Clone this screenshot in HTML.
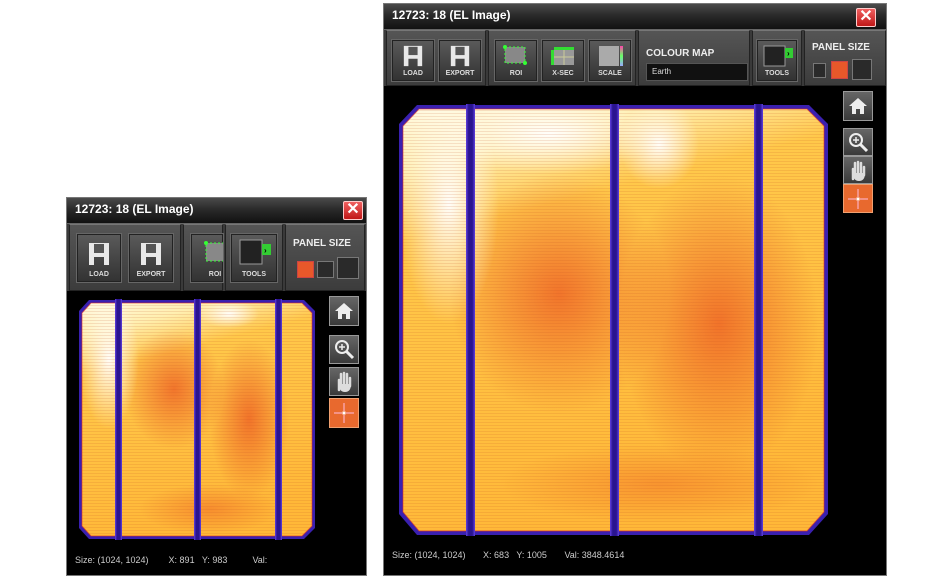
<!DOCTYPE html>
<html><head><meta charset="utf-8"><style>
*{margin:0;padding:0;box-sizing:border-box}
body{width:950px;height:580px;background:#fff;position:relative;overflow:hidden;font-family:"Liberation Sans",sans-serif}
.win{position:absolute;background:#000;border:1px solid #777}
.title{position:absolute;left:0;right:0;top:0;height:25px;background:linear-gradient(#4a4a4a,#2a2a2a 45%,#111);color:#fff;font-weight:bold;font-size:12px;padding:4px 0 0 8px}
.x{position:absolute;top:3px;width:20px;height:19px;background:linear-gradient(#f06060,#c01818);border:1px solid #fcc;border-radius:2px;color:#fff;font-size:16px;line-height:16px;text-align:center;font-weight:bold}
.tb{position:absolute;left:0;right:0;background:#3a3a3a;border-top:1px solid #666}
.grp{position:absolute;top:0;bottom:0;background:linear-gradient(#555,#3c3c3c);border:1px solid #222;border-top-color:#777}
.btn{position:absolute;background:linear-gradient(#5a5a5a,#444 55%,#333);border:1px solid #222;outline:1px solid #666;color:#ddd;font-size:7px;font-weight:bold;text-align:center}
.btn span{position:absolute;left:0;right:0;bottom:3px}
.lbl{position:absolute;color:#eee;font-weight:bold;font-size:10px}
.sq{position:absolute;border:1px solid #777;background:#2a2a2a}
.tool{position:absolute;background:linear-gradient(#666,#3a3a3a);border:1px solid #999}
.stat{position:absolute;color:#ccc;font-size:9px;white-space:pre}
</style></head><body>

<svg width="0" height="0" style="position:absolute">
<defs>
<linearGradient id="lg" x1="0" y1="0" x2="0.25" y2="1">
<stop offset="0" stop-color="#fffbe8"/><stop offset="0.15" stop-color="#ffefb0"/><stop offset="0.3" stop-color="#ffc84a"/><stop offset="1" stop-color="#ffb838"/>
</linearGradient>
<radialGradient id="r1" cx="0.5" cy="0.5" r="0.5"><stop offset="0" stop-color="#e8401a" stop-opacity="0.6"/><stop offset="1" stop-color="#e8401a" stop-opacity="0"/></radialGradient>
<radialGradient id="w1" cx="0.5" cy="0.5" r="0.5"><stop offset="0" stop-color="#fff" stop-opacity="0.95"/><stop offset="1" stop-color="#fff" stop-opacity="0"/></radialGradient>
<pattern id="ln" width="4" height="3" patternUnits="userSpaceOnUse"><rect width="4" height="1" fill="#c05020" opacity="0.15"/></pattern>
<linearGradient id="bb" x1="0" x2="1"><stop offset="0" stop-color="#6040e0"/><stop offset="0.3" stop-color="#2a1490"/><stop offset="0.7" stop-color="#2a1490"/><stop offset="1" stop-color="#6040e0"/></linearGradient>
<clipPath id="cs"><path d="M12 4H223L233 14V227L223 237H12L3 227V14Z"/></clipPath>
<clipPath id="cl"><path d="M20 5H408L425 22V408L408 427H20L4 408V22Z"/></clipPath>
</defs>
</svg>

<!-- Small window -->
<div class="win" style="left:66px;top:197px;width:301px;height:379px">
<div class="title">12723: 18 (EL Image)</div>
<div class="x" style="left:276px">✕</div>
<div class="tb" style="top:25px;height:68px">
 <div class="grp" style="left:2px;width:112px"></div>
 <div class="btn" style="left:10px;top:10px;width:44px;height:48px"><svg width="24" height="26" style="margin-top:6px" viewBox="0 0 24 26"><path d="M2 2h20v22h-5v-8h-10v8h-5z" fill="#e8e8e8"/><rect x="7" y="3" width="10" height="9" fill="#555"/></svg><span>LOAD</span></div>
 <div class="btn" style="left:62px;top:10px;width:44px;height:48px"><svg width="24" height="26" style="margin-top:6px" viewBox="0 0 24 26"><path d="M2 2h20v22h-5v-8h-10v8h-5z" fill="#e8e8e8"/><rect x="7" y="3" width="10" height="9" fill="#555"/></svg><span>EXPORT</span></div>
 <div class="grp" style="left:116px;width:40px"></div>
 <div class="btn" style="left:124px;top:10px;width:32px;height:48px"><svg width="32" height="28" style="margin-top:2px"><rect x="14" y="6" width="22" height="18" fill="#888" stroke="#3f3" stroke-dasharray="2 2"/><circle cx="14" cy="6" r="2" fill="#3f3"/></svg><span style="left:16px">ROI</span></div>
 <div class="grp" style="left:158px;width:58px"></div>
 <div class="btn" style="left:164px;top:10px;width:46px;height:48px"><svg width="40" height="30" style="margin-top:3px"><rect x="6" y="2" width="22" height="24" fill="#222" stroke="#999"/><rect x="28" y="6" width="9" height="11" fill="#3c3"/><text x="30" y="15" font-size="8" fill="#000" font-weight="bold">›</text></svg><span>TOOLS</span></div>
 <div class="grp" style="left:218px;width:80px"></div>
 <div class="lbl" style="left:226px;top:14px">PANEL SIZE</div>
 <div class="sq" style="left:230px;top:37px;width:17px;height:17px;background:#e8582a;border-color:#c44"></div>
 <div class="sq" style="left:250px;top:37px;width:17px;height:17px"></div>
 <div class="sq" style="left:270px;top:33px;width:22px;height:22px"></div>
</div>
<svg style="position:absolute;left:12px;top:101px" width="237" height="241" viewBox="0 0 237 241">
 <path d="M10 1H225L236 12V229L225 240H10L0 229V12Z" fill="#3a20b0"/>
 <g clip-path="url(#cs)">
 <rect width="237" height="241" fill="url(#lg)"/>
 <ellipse cx="95" cy="90" rx="50" ry="60" fill="url(#r1)"/>
 <ellipse cx="170" cy="120" rx="40" ry="80" fill="url(#r1)"/>
 <ellipse cx="130" cy="210" rx="70" ry="25" fill="url(#r1)" opacity="0.6"/>
 <ellipse cx="30" cy="60" rx="30" ry="70" fill="url(#w1)"/>
 <ellipse cx="150" cy="15" rx="30" ry="14" fill="url(#w1)"/>
 <rect width="237" height="241" fill="url(#ln)"/>
 </g>
 <path d="M3 14V227L12 237H223L233 227V14L223 4H12Z" fill="none" stroke="#e03020" stroke-width="1" opacity="0.6"/>
 <rect x="36" y="0" width="7" height="241" fill="url(#bb)"/>
 <rect x="115" y="0" width="7" height="241" fill="url(#bb)"/>
 <rect x="196" y="0" width="7" height="241" fill="url(#bb)"/>
</svg>
<div class="tool" style="left:262px;top:98px;width:30px;height:30px"><svg width="28" height="28"><path d="M14 6L5 14h3v8h4v-5h4v5h4v-8h3z" fill="#eee"/></svg></div>
<div class="tool" style="left:262px;top:137px;width:30px;height:29px"><svg width="28" height="28"><circle cx="12" cy="11" r="6" fill="none" stroke="#eee" stroke-width="2"/><path d="M16 15l7 7" stroke="#eee" stroke-width="3"/><path d="M9 11h6M12 8v6" stroke="#eee" stroke-width="1.5"/></svg></div>
<div class="tool" style="left:262px;top:169px;width:30px;height:29px"><svg width="28" height="28"><path d="M9 22V12M11 18V6M14 18V5M17 18V6M20 18V10" stroke="#ddd" stroke-width="2.5" stroke-linecap="round"/><path d="M9 16q0 8 6 8t6-8" fill="#ddd"/></svg></div>
<div class="tool" style="left:262px;top:200px;width:30px;height:30px;background:#e8692e;border-color:#f0a070"><svg width="28" height="28"><path d="M4 14h8M16 14h8M14 4v8M14 16v8" stroke="#fbd" stroke-width="1"/><rect x="12.5" y="12.5" width="3" height="3" fill="#fff"/></svg></div>
<div class="stat" style="left:8px;top:357px">Size: (1024, 1024)        X: 891   Y: 983          Val:</div>
</div>

<!-- Large window -->
<div class="win" style="left:383px;top:3px;width:504px;height:573px">
<div class="title">12723: 18 (EL Image)</div>
<div class="x" style="left:472px;top:4px">✕</div>
<div class="tb" style="top:25px;height:57px">
 <div class="grp" style="left:2px;width:100px"></div>
 <div class="btn" style="left:8px;top:10px;width:42px;height:41px"><svg width="22" height="24" style="margin-top:3px" viewBox="0 0 24 26"><path d="M2 2h20v22h-5v-8h-10v8h-5z" fill="#e8e8e8"/><rect x="7" y="3" width="10" height="9" fill="#555"/></svg><span>LOAD</span></div>
 <div class="btn" style="left:55px;top:10px;width:42px;height:41px"><svg width="22" height="24" style="margin-top:3px" viewBox="0 0 24 26"><path d="M2 2h20v22h-5v-8h-10v8h-5z" fill="#e8e8e8"/><rect x="7" y="3" width="10" height="9" fill="#555"/></svg><span>EXPORT</span></div>
 <div class="grp" style="left:104px;width:148px"></div>
 <div class="btn" style="left:111px;top:10px;width:42px;height:41px"><svg width="30" height="26" style="margin-top:2px"><rect x="4" y="4" width="20" height="16" fill="#888" stroke="#3f3" stroke-dasharray="2 2"/><circle cx="4" cy="4" r="2" fill="#3f3"/><circle cx="24" cy="20" r="2" fill="#3f3"/></svg><span>ROI</span></div>
 <div class="btn" style="left:158px;top:10px;width:42px;height:41px"><svg width="30" height="26" style="margin-top:2px"><rect x="6" y="4" width="20" height="18" fill="#999"/><rect x="6" y="4" width="20" height="3" fill="#3d3"/><rect x="3" y="7" width="3" height="15" fill="#3d3"/><path d="M16 7v15M6 14h20" stroke="#cc9"/></svg><span>X-SEC</span></div>
 <div class="btn" style="left:205px;top:10px;width:42px;height:41px"><svg width="30" height="26" style="margin-top:2px"><defs><linearGradient id="rb" x1="0" y1="0" x2="0" y2="1"><stop offset="0" stop-color="#f4a"/><stop offset=".5" stop-color="#6f6"/><stop offset="1" stop-color="#9af"/></linearGradient></defs><rect x="4" y="3" width="20" height="20" fill="#aaa"/><rect x="25" y="3" width="3" height="20" fill="url(#rb)"/></svg><span>SCALE</span></div>
 <div class="grp" style="left:254px;width:112px"></div>
 <div class="lbl" style="left:262px;top:18px">COLOUR MAP</div>
 <div style="position:absolute;left:262px;top:33px;width:102px;height:18px;background:#111;border:1px solid #555;color:#ddd;font-size:8px;padding:3px 5px">Earth</div>
 <div class="grp" style="left:368px;width:50px"></div>
 <div class="btn" style="left:373px;top:10px;width:40px;height:41px"><svg width="36" height="26" style="margin-top:2px"><rect x="5" y="3" width="21" height="20" fill="#222" stroke="#999"/><rect x="26" y="5" width="8" height="10" fill="#3c3"/><text x="28" y="13" font-size="8" fill="#000" font-weight="bold">›</text></svg><span>TOOLS</span></div>
 <div class="grp" style="left:420px;width:82px"></div>
 <div class="lbl" style="left:428px;top:12px">PANEL SIZE</div>
 <div class="sq" style="left:429px;top:33px;width:13px;height:15px"></div>
 <div class="sq" style="left:447px;top:31px;width:17px;height:18px;background:#e8582a;border-color:#c44"></div>
 <div class="sq" style="left:468px;top:29px;width:20px;height:21px"></div>
</div>
<svg style="position:absolute;left:15px;top:100px" width="430" height="432" viewBox="0 0 430 432">
 <path d="M18 1H410L429 20V410L410 431H18L0 410V20Z" fill="#3a20b0"/>
 <g clip-path="url(#cl)">
 <rect width="430" height="432" fill="url(#lg)"/>
 <ellipse cx="160" cy="190" rx="110" ry="120" fill="url(#r1)"/>
 <ellipse cx="320" cy="220" rx="100" ry="150" fill="url(#r1)"/>
 <ellipse cx="260" cy="380" rx="160" ry="40" fill="url(#r1)" opacity="0.5"/>
 <ellipse cx="50" cy="100" rx="50" ry="120" fill="url(#w1)"/>
 <ellipse cx="150" cy="30" rx="110" ry="40" fill="url(#w1)"/>
 <ellipse cx="260" cy="40" rx="40" ry="45" fill="url(#w1)"/>
 <rect width="430" height="432" fill="url(#ln)"/>
 </g>
 <path d="M20 5H408L425 22V408L408 427H20L4 408V22Z" fill="none" stroke="#e03020" stroke-width="1" opacity="0.6"/>
 <rect x="67" y="0" width="9" height="432" fill="url(#bb)"/>
 <rect x="211" y="0" width="9" height="432" fill="url(#bb)"/>
 <rect x="355" y="0" width="9" height="432" fill="url(#bb)"/>
</svg>
<div class="tool" style="left:459px;top:87px;width:30px;height:30px"><svg width="28" height="28"><path d="M14 6L5 14h3v8h4v-5h4v5h4v-8h3z" fill="#eee"/></svg></div>
<div class="tool" style="left:459px;top:124px;width:30px;height:28px"><svg width="28" height="28"><circle cx="12" cy="11" r="6" fill="none" stroke="#eee" stroke-width="2"/><path d="M16 15l7 7" stroke="#eee" stroke-width="3"/><path d="M9 11h6M12 8v6" stroke="#eee" stroke-width="1.5"/></svg></div>
<div class="tool" style="left:459px;top:152px;width:30px;height:28px"><svg width="28" height="28"><path d="M9 22V12M11 18V6M14 18V5M17 18V6M20 18V10" stroke="#ddd" stroke-width="2.5" stroke-linecap="round"/><path d="M9 16q0 8 6 8t6-8" fill="#ddd"/></svg></div>
<div class="tool" style="left:459px;top:180px;width:30px;height:29px;background:#e8692e;border-color:#f0a070"><svg width="28" height="28"><path d="M4 14h8M16 14h8M14 4v8M14 16v8" stroke="#fbd" stroke-width="1"/><rect x="12.5" y="12.5" width="3" height="3" fill="#fff"/></svg></div>
<div class="stat" style="left:8px;top:546px">Size: (1024, 1024)       X: 683   Y: 1005       Val: 3848.4614</div>
</div>
</body></html>
